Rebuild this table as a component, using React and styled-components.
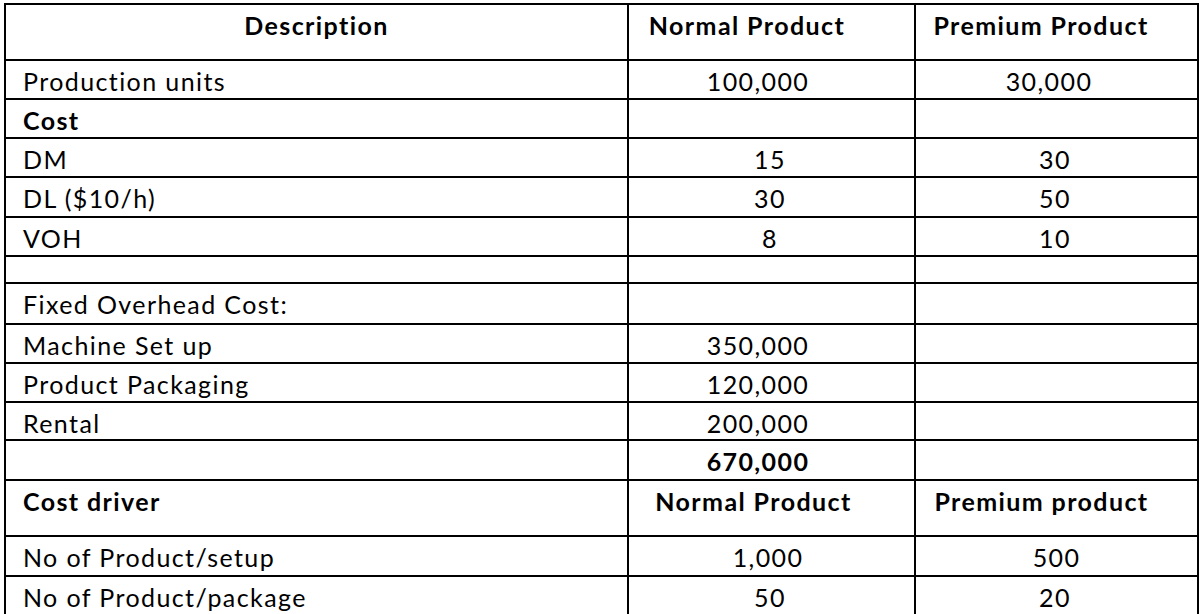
import React from "react";
import styled, { createGlobalStyle } from "styled-components";

const Global = createGlobalStyle`
  html, body {
    margin: 0;
    padding: 0;
    background: #ffffff;
    overflow: hidden;
  }
  body {
    font-family: "Lato", "Open Sans", sans-serif;
    color: #000;
  }
`;

const Page = styled.div`
  padding: 3px 0 0 4px;
`;

const Table = styled.div`
  display: grid;
  grid-template-columns: 623px 287px 283px;
  border-top: 2px solid #000;
  border-left: 2px solid #000;
  width: max-content;
`;

const Cell = styled.div`
  box-sizing: border-box;
  height: ${(p) => p.$h}px;
  border-right: 2px solid #000;
  border-bottom: 2px solid #000;
  padding: 6px ${(p) => p.$pr || 0}px 0 ${(p) => p.$pl || 0}px;
  font-size: 25px;
  letter-spacing: 1.4px;
  line-height: 29px;
  font-weight: ${(p) => (p.$bold ? 700 : 400)};
  text-align: ${(p) => p.$align || "left"};
  white-space: nowrap;
  overflow: hidden;
`;

const rows = [
  { h: 56, cells: [
    { t: "Description", bold: true, align: "center" },
    { t: "Normal Product", bold: true, align: "center", pr: 49 },
    { t: "Premium Product", bold: true, align: "center", pr: 31 },
  ] },
  { h: 39, cells: [
    { t: "Production units" },
    { t: "100,000", align: "center", pr: 27 },
    { t: "30,000", align: "center", pr: 15 },
  ] },
  { h: 39, cells: [{ t: "Cost", bold: true }, { t: "" }, { t: "" }] },
  { h: 39, cells: [
    { t: "DM" },
    { t: "15", align: "center", pr: 3 },
    { t: "30", align: "center", pr: 3 },
  ] },
  { h: 40, cells: [
    { t: "DL ($10/h)" },
    { t: "30", align: "center", pr: 3 },
    { t: "50", align: "center", pr: 3 },
  ] },
  { h: 39, cells: [
    { t: "VOH" },
    { t: "8", align: "center", pr: 3 },
    { t: "10", align: "center", pr: 3 },
  ] },
  { h: 27, cells: [{ t: "" }, { t: "" }, { t: "" }] },
  { h: 41, cells: [{ t: "Fixed Overhead Cost:" }, { t: "" }, { t: "" }] },
  { h: 39, cells: [
    { t: "Machine Set up" },
    { t: "350,000", align: "center", pr: 27 },
    { t: "" },
  ] },
  { h: 39, cells: [
    { t: "Product Packaging" },
    { t: "120,000", align: "center", pr: 27 },
    { t: "" },
  ] },
  { h: 38, cells: [
    { t: "Rental" },
    { t: "200,000", align: "center", pr: 27 },
    { t: "" },
  ] },
  { h: 40, cells: [
    { t: "" },
    { t: "670,000", bold: true, align: "center", pr: 27 },
    { t: "" },
  ] },
  { h: 56, cells: [
    { t: "Cost driver", bold: true },
    { t: "Normal Product", bold: true, align: "center", pr: 36 },
    { t: "Premium product", bold: true, align: "center", pr: 30 },
  ] },
  { h: 40, cells: [
    { t: "No of Product/setup" },
    { t: "1,000", align: "center", pr: 7 },
    { t: "500", align: "center", pr: 0 },
  ] },
  { h: 40, cells: [
    { t: "No of Product/package" },
    { t: "50", align: "center", pr: 3 },
    { t: "20", align: "center", pr: 3 },
  ] },
];

export default function App() {
  return (
    <Page>
      <Global />
      <Table>
        {rows.map((r, i) =>
          r.cells.map((c, j) => (
            <Cell
              key={`${i}-${j}`}
              $h={r.h}
              $bold={c.bold}
              $align={c.align}
              $pr={c.pr}
              $pl={j === 0 && c.align !== "center" ? 17 : 0}
            >
              {c.t}
            </Cell>
          ))
        )}
      </Table>
    </Page>
  );
}
